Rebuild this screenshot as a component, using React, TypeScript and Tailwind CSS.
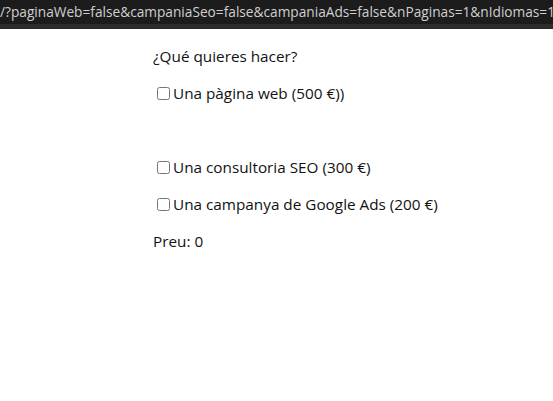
export default function App() {
  const font = { fontFamily: '"Open Sans", "Noto Sans", sans-serif' }
  return (
    <div className="w-screen h-screen bg-white" style={font}>
      <div className="h-[24px] bg-[#1c1c1c] text-[#cfcfcf] text-[13.7px] leading-[24px] whitespace-nowrap overflow-hidden">
        /?paginaWeb=false&amp;campaniaSeo=false&amp;campaniaAds=false&amp;nPaginas=1&amp;nIdiomas=1
      </div>
      <div className="h-[5px] bg-[#2c2c2c]" />
      <div className="pl-[153px] pt-[17px] text-[15.3px] leading-[21px] text-[#111]">
        <p>¿Qué quieres hacer?</p>
        <label className="flex items-center mt-[16px]">
          <input type="checkbox" className="w-[13px] h-[13px] ml-[4px] mr-[3px]" />
          Una pàgina web (500 €))
        </label>
        <div className="h-[37px]" />
        <label className="flex items-center mt-[16px]">
          <input type="checkbox" className="w-[13px] h-[13px] ml-[4px] mr-[3px]" />
          Una consultoria SEO (300 €)
        </label>
        <label className="flex items-center mt-[16px]">
          <input type="checkbox" className="w-[13px] h-[13px] ml-[4px] mr-[3px]" />
          Una campanya de Google Ads (200 €)
        </label>
        <p className="mt-[16px]">Preu: 0</p>
      </div>
    </div>
  )
}
